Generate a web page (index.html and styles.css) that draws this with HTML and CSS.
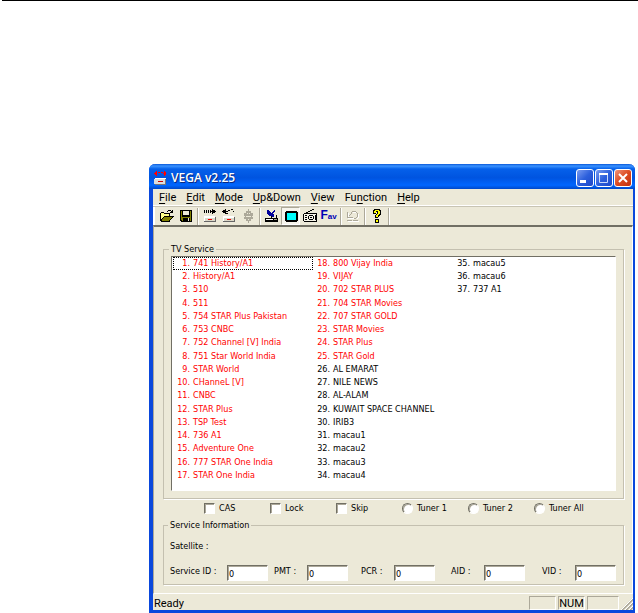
FILE: index.html
```
<!DOCTYPE html>
<html lang="en">
<head>
  <meta charset="UTF-8">
  <meta name="viewport" content="width=device-width, initial-scale=1.0">
  <title>VEGA v2.25</title>
  <link rel="stylesheet" href="styles.css">
</head>
<body>
  <hr class="page-rule">
  <main class="window">
    <header class="titlebar">
      <svg class="app-icon" width="16" height="16" viewBox="0 0 16 16" shape-rendering="crispEdges">
        <path fill="#f00" d="M2 2h2v1h-2zM1 3h3v1h-3zM2 4h2v1h-2zM3 1h1v5h-1zM5 2h2v1h-2zM8 2h2v1h-2zM10 3h3v1h-3zM11 2h2v3h-2zM11 1h1v5h-1z"/>
        <path fill="#ddd" d="M1 9h11v5h-11z"/>
        <path fill="#fff" d="M2 8h11v1h-11z"/>
        <path fill="#777" d="M12 9h1v5h-1zM2 14h11v1h-11z"/>
        <path fill="#c00" d="M5 11h5v1h-5z"/>
      </svg>
      <h1>VEGA v2.25</h1>
      <div class="window-buttons">
        <button class="win-btn" aria-label="Minimize"><svg width="16" height="16" viewBox="0 0 16 16"><path fill="#fff" d="M3 10h6v3h-6z"/></svg></button>
        <button class="win-btn" aria-label="Maximize"><svg width="16" height="16" viewBox="0 0 16 16"><path fill="none" stroke="#c8d8fa" d="M3.500 4.500h8v8h-8z"/><path fill="#fff" d="M3 3h9v2h-9z"/></svg></button>
        <button class="win-btn close" aria-label="Close"><svg width="16" height="16" viewBox="0 0 16 16"><path stroke="#fff" stroke-width="2" d="M4 4l8 8M12 4l-8 8"/></svg></button>
      </div>
    </header>

    <nav class="menubar">
      <button><u>F</u>ile</button>
      <button><u>E</u>dit</button>
      <button><u>M</u>ode</button>
      <button><u>U</u>p&amp;Down</button>
      <button><u>V</u>iew</button>
      <button>Fu<u>n</u>ction</button>
      <button><u>H</u>elp</button>
    </nav>

    <div class="toolbar">
      <button aria-label="Open">
        <svg width="16" height="16" viewBox="0 0 16 16" shape-rendering="crispEdges">
          <path d="M9 2h3v1h-3zM8 3h1v1h-1zM12 3h1v1h-1zM13 2h1v3h-1zM11 4h2v1h-2zM2 4h3v1h-3zM1 5h1v8h-1zM5 5h6v1h-6zM10 6h1v2h-1zM5 8h10v1h-10zM4 9h1v1h-1zM3 10h1v1h-1zM2 11h1v2h-1zM13 9h1v1h-1zM12 10h1v1h-1zM11 11h1v1h-1zM2 13h9v1h-9zM10 12h1v1h-1z"/>
          <path fill="#ff8" d="M2 5h3v1h5v2h-5v1h-1v1h-1v1h-1z"/>
          <path fill="#808000" d="M5 9h8v1h-1v1h-1v1h-1v1h-7v-2h1v-1h1z"/>
        </svg>
      </button>
      <button aria-label="Save">
        <svg width="16" height="16" viewBox="0 0 16 16" shape-rendering="crispEdges">
          <path d="M2 2h12v12h-11v-1h-1z"/>
          <path fill="#808000" d="M3 3h1v6h8v-6h1v10h-9v-1h-1z"/>
          <path fill="#ece9d8" d="M5 3h6v4h-6z"/>
          <path d="M5 10h7v3h-7z"/>
          <path fill="#ece9d8" d="M10 10h1v3h-1z"/>
        </svg>
      </button>
      <span class="sep"></span>
      <button aria-label="Receive from device">
        <svg width="16" height="16" viewBox="0 0 16 16" shape-rendering="crispEdges">
          <path d="M2 2h1v3h-1zM4 2h1v3h-1zM6 2h1v3h-1zM8 2h1v3h-1zM9 3h4v1h-4zM10 1h1v5h-1zM11 2h2v3h-2zM13 3h1v1h-1z"/>
          <path fill="#fff" d="M2 8h11v2h-11zM2 9h1v4h-1z"/>
          <path fill="#dcd8c8" d="M3 10h10v3h-10z"/>
          <path fill="#666" d="M13 9h1v5h-1zM2 13h11v1h-11z"/>
          <path fill="#e00" d="M6 11h4v1h-4z"/>
        </svg>
      </button>
      <button aria-label="Send to device">
        <svg width="16" height="16" viewBox="0 0 16 16" shape-rendering="crispEdges">
          <path d="M1 3h1v1h-1zM2 2h2v3h-2zM4 1h1v5h-1zM5 3h2v1h-2zM7 2h2v1h-2zM10 1h2v1h-2zM12 3h1v1h-1zM5 5h2v1h-2z"/>
          <path fill="#fff" d="M2 8h11v2h-11zM2 9h1v4h-1z"/>
          <path fill="#dcd8c8" d="M3 10h10v3h-10z"/>
          <path fill="#666" d="M13 9h1v5h-1zM2 13h11v1h-11z"/>
          <path fill="#e00" d="M6 11h4v1h-4z"/>
        </svg>
      </button>
      <button aria-label="Stop transfer" disabled>
        <svg width="16" height="16" viewBox="0 0 16 16" shape-rendering="crispEdges">
          <path fill="#aca899" d="M8 1h1v2h2v2h2v3h-1v1h1v2h-2v2h-2v2h-1v-2h-2v-2h-2v-2h1v-1h-1v-3h2v-2h2z"/>
          <path fill="#ece9d8" d="M7 5h1v1h-1zM9 5h1v1h-1zM6 8h5v1h-5zM8 11h1v1h-1z"/>
        </svg>
      </button>
      <span class="sep"></span>
      <button aria-label="Satellite setup">
        <svg width="16" height="16" viewBox="0 0 16 16" shape-rendering="crispEdges">
          <path fill="#00009c" d="M3 2h2v1h1v1h1v1h1v-1h1v-1h1v-1h1v2h-1v1h-1v1h1v3h-3v-1h-2v-1h-1v-1h-1z"/>
          <path d="M7 8h1v2h-1zM1 10h13v4h-13zM12 7h1v3h-1z"/>
          <path fill="#fff" d="M2 11h7v1h-7z"/>
          <path fill="#aca899" d="M10 11h3v1h-3z"/>
        </svg>
      </button>
      <button class="pressed" aria-label="TV services" aria-pressed="true">
        <svg width="16" height="16" viewBox="0 0 16 16" shape-rendering="crispEdges">
          <path d="M3 3h11v1h1v9h-1v1h-11v-1h-1v-9h1z"/>
          <path fill="#0ff" d="M4 5h9v7h-9z"/>
        </svg>
      </button>
      <button aria-label="Radio services">
        <svg width="16" height="16" viewBox="0 0 16 16" shape-rendering="crispEdges">
          <path d="M10 1h2v1h-2zM8 2h2v1h-2zM6 3h2v1h-2zM4 4h2v1h-2zM2 5h13v1h-13zM1 6h1v7h-1zM14 6h1v7h-1zM2 13h13v1h-13z"/>
          <path fill="#f6f4e8" d="M2 6h12v7h-12z"/>
          <path d="M3 7h2v1h-2zM3 9h2v1h-2zM3 11h2v1h-2zM7 7h4v1h-4zM6 8h1v3h-1zM11 8h1v3h-1zM7 11h4v1h-4zM8 9h2v1h-2zM13 7h1v5h-1z"/>
        </svg>
      </button>
      <button class="fav" aria-label="Favourites"><b>F</b>av</button>
      <span class="sep"></span>
      <button aria-label="Undo" disabled>
        <svg width="16" height="16" viewBox="0 0 16 16" shape-rendering="crispEdges">
          <path fill="#fff" d="M3 5h1v5h5v1h-6zM8 4h4v1h1v1h1v4h-1v1h-1v-1h1v-4h-1v-1h-4zM3 13h11v1h-11z"/>
          <path fill="#aca899" d="M2 4h1v5h5v1h-6zM4 7h1v1h-1zM5 6h1v1h-1zM6 4h1v2h-1zM7 3h4v1h-4zM11 4h1v1h-1zM12 5h1v4h-1zM11 9h1v1h-1zM9 10h2v1h-2zM2 12h5v1h-5zM8 12h5v1h-5z"/>
        </svg>
      </button>
      <span class="sep"></span>
      <button aria-label="Help">
        <svg width="16" height="16" viewBox="0 0 16 16" shape-rendering="crispEdges">
          <path d="M5 1h6v1h1v5h-1v1h-1v1h-1v1h-3v-3h1v-1h1v-2h-1v2h-3v-4h1zM6 11h4v4h-4z"/>
          <path fill="#ff0" d="M6 2h4v1h1v3h-1v1h-1v2h-2v-2h1v-1h1v-3h-2v2h-2v-2h1zM7 12h2v2h-2z"/>
        </svg>
      </button>
      <span class="sep"></span>
    </div>

    <section class="client">
      <fieldset class="tv">
        <legend>TV Service</legend>
        <ol class="services">
          <li class="scrambled focused"><span>1.</span>741 History/A1</li>
          <li class="scrambled"><span>2.</span>History/A1</li>
          <li class="scrambled"><span>3.</span>510</li>
          <li class="scrambled"><span>4.</span>511</li>
          <li class="scrambled"><span>5.</span>754 STAR Plus Pakistan</li>
          <li class="scrambled"><span>6.</span>753 CNBC</li>
          <li class="scrambled"><span>7.</span>752 Channel [V] India</li>
          <li class="scrambled"><span>8.</span>751 Star World India</li>
          <li class="scrambled"><span>9.</span>STAR World</li>
          <li class="scrambled"><span>10.</span>CHanneL [V]</li>
          <li class="scrambled"><span>11.</span>CNBC</li>
          <li class="scrambled"><span>12.</span>STAR Plus</li>
          <li class="scrambled"><span>13.</span>TSP Test</li>
          <li class="scrambled"><span>14.</span>736 A1</li>
          <li class="scrambled"><span>15.</span>Adventure One</li>
          <li class="scrambled"><span>16.</span>777 STAR One India</li>
          <li class="scrambled"><span>17.</span>STAR One India</li>
          <li class="scrambled"><span>18.</span>800 Vijay India</li>
          <li class="scrambled"><span>19.</span>VIJAY</li>
          <li class="scrambled"><span>20.</span>702 STAR PLUS</li>
          <li class="scrambled"><span>21.</span>704 STAR Movies</li>
          <li class="scrambled"><span>22.</span>707 STAR GOLD</li>
          <li class="scrambled"><span>23.</span>STAR Movies</li>
          <li class="scrambled"><span>24.</span>STAR Plus</li>
          <li class="scrambled"><span>25.</span>STAR Gold</li>
          <li><span>26.</span>AL EMARAT</li>
          <li><span>27.</span>NILE NEWS</li>
          <li><span>28.</span>AL-ALAM</li>
          <li><span>29.</span>KUWAIT SPACE CHANNEL</li>
          <li><span>30.</span>IRIB3</li>
          <li><span>31.</span>macau1</li>
          <li><span>32.</span>macau2</li>
          <li><span>33.</span>macau3</li>
          <li><span>34.</span>macau4</li>
          <li><span>35.</span>macau5</li>
          <li><span>36.</span>macau6</li>
          <li><span>37.</span>737 A1</li>
        </ol>
      </fieldset>

      <div class="options">
        <label><input type="checkbox"> CAS</label>
        <label><input type="checkbox"> Lock</label>
        <label><input type="checkbox"> Skip</label>
        <label><input type="radio" name="tuner"> Tuner 1</label>
        <label><input type="radio" name="tuner"> Tuner 2</label>
        <label><input type="radio" name="tuner"> Tuner All</label>
      </div>

      <fieldset class="info">
        <legend>Service Information</legend>
        <p>Satellite :</p>
        <div class="fields">
          <div class="field"><label for="sid">Service ID :</label><input id="sid" type="text" value="0"></div>
          <div class="field"><label for="pmt">PMT :</label><input id="pmt" type="text" value="0"></div>
          <div class="field"><label for="pcr">PCR :</label><input id="pcr" type="text" value="0"></div>
          <div class="field"><label for="aid">AID :</label><input id="aid" type="text" value="0"></div>
          <div class="field"><label for="vid">VID :</label><input id="vid" type="text" value="0"></div>
        </div>
      </fieldset>
    </section>

    <footer class="statusbar">
      <span class="message">Ready</span>
      <span class="pane"></span>
      <span class="pane">NUM</span>
      <span class="pane wide"></span>
      <svg class="grip" width="12" height="12" viewBox="0 0 12 12">
        <path stroke="#aca899" stroke-width="2" d="M1 12L12 1M5 12L12 5M9 12L12 9"/>
        <path stroke="#fff" d="M0 12L12 0M4 12L12 4M8 12L12 8"/>
      </svg>
    </footer>
  </main>
</body>
</html>
```
FILE: styles.css
```
* {
  box-sizing: border-box;
}
body {
  margin: 0;
  background: #fff;
  color: #000;
  font-family: "DejaVu Sans Condensed", "DejaVu Sans", sans-serif;
  font-size: 9px;
  line-height: 13px;
}
button, input {
  font: inherit;
  color: inherit;
  margin: 0;
  padding: 0;
}
.page-rule {
  height: 1px;
  margin: 0 0 163px 2px;
  border: 0;
  background: #000;
}
.window {
  margin: 0 3px 0 149px;
  border: solid #0a48dc;
  border-width: 0 2px 3px 4px;
  border-radius: 6px 6px 0 0;
  background: #ece9d8;
}

/* title bar */
.titlebar {
  display: flex;
  align-items: center;
  gap: 2px;
  height: 25px;
  margin: 0 -2px 0 -4px;
  padding: 2px 3px 0 4px;
  border-radius: 6px 6px 0 0;
  background: linear-gradient(#0a58d8 0, #3a93ff 8%, #0560ea 20%, #0054e0 55%, #0066ff 85%, #0048c8 100%);
}
.titlebar h1 {
  flex: 1;
  margin: 0;
  color: #fff;
  font: 600 12px/16px "Open Sans", sans-serif;
  text-shadow: 1px 1px #0a2a80;
}
.window-buttons {
  display: flex;
  gap: 1px;
}
.win-btn {
  width: 18px;
  height: 18px;
  border: 1px solid #fff;
  border-radius: 3px;
  background: linear-gradient(135deg, #7a9cf0, #2c5fdc 50%, #1e48c8);
}
.win-btn.close {
  background: linear-gradient(135deg, #f0937a, #dc4a20 50%, #c03010);
}
.win-btn svg {
  display: block;
}

/* menu */
.menubar {
  display: flex;
  gap: 10px;
  height: 18px;
  padding-left: 6px;
  border-bottom: 1px solid #c8c4b4;
  box-shadow: inset 0 -1px #fff;
}
.menubar button {
  border: 0;
  background: none;
  font: 11px/16px Roboto, "Liberation Sans", sans-serif;
}
.menubar u {
  text-underline-offset: 2px;
}

/* toolbar */
.toolbar {
  display: flex;
  align-items: center;
  height: 18px;
  padding-left: 4px;
  box-shadow: inset 2px 0 #fff;
}
.toolbar button {
  display: grid;
  place-items: center;
  width: 19px;
  height: 18px;
  border: 0;
  background: none;
}
.toolbar svg {
  display: block;
}
.toolbar .pressed {
  border: 1px solid;
  border-color: #aca899 #fff #fff #aca899;
  background: #f6f4ec;
}
.sep {
  width: 2px;
  height: 17px;
  margin: 0 1px 0 2px;
  border-left: 1px solid #aca899;
  border-right: 1px solid #fff;
}
.toolbar .fav {
  display: flex;
  align-items: baseline;
  justify-content: center;
  color: #0000b4;
  font: bold 8px/16px "Liberation Sans", sans-serif;
}
.fav b {
  font-size: 12px;
}

/* client area */
.client {
  padding: 16px 8px 8px 9px;
  border: 1px solid;
  border-width: 2px 1px 1px;
  border-color: #716f64 #fff #fff #aca899;
}
fieldset {
  min-width: 0;
  margin: 0;
  border: 1px solid #c4c0b0;
  box-shadow: 1px 1px #fff;
}
legend {
  margin-left: -2px;
  padding: 0 2px;
}
.tv {
  padding: 0 7px 7px;
}
.services {
  display: grid;
  grid-template-rows: repeat(17, 1fr);
  grid-auto-flow: column;
  grid-auto-columns: 140px;
  height: 235px;
  margin: 0;
  padding: 0 0 8px 1px;
  border: 1px solid;
  border-color: #716f64 #fff #fff #716f64;
  background: #fff;
  list-style: none;
  overflow: hidden;
}
.services li {
  display: flex;
  gap: 3px;
  padding-left: 3px;
  white-space: nowrap;
}
.services span {
  width: 14px;
  text-align: right;
}
.services .scrambled {
  color: #f00;
}
.services .focused {
  outline: 1px dotted #000;
  outline-offset: -1px;
}

/* lock flags and tuner choice */
.options {
  display: grid;
  grid-template-columns: repeat(5, 66px) auto;
  margin: 3px 0 4px 41px;
}
.options label {
  display: flex;
  align-items: center;
  gap: 4px;
}
.options input {
  appearance: none;
  width: 11px;
  height: 11px;
  border: 1px solid;
  border-color: #716f64 #fff #fff #716f64;
  background: #fff;
  box-shadow: inset 1px 1px #aca899;
}
.options input[type="radio"] {
  border-radius: 50%;
}

/* service information */
.info {
  padding: 8px 7px 3px 6px;
}
.info p {
  margin: 0 0 12px;
}
.fields {
  display: grid;
  grid-template-columns: 104px 87px 90px 91px auto;
}
.field {
  display: flex;
}
.field label {
  width: 33px;
  white-space: nowrap;
}
.field:first-child label {
  width: 57px;
}
.field input {
  width: 41px;
  height: 16px;
  padding: 1px 0 0 1px;
  border: 1px solid;
  border-color: #716f64 #fff #fff #716f64;
  background: #fff;
  box-shadow: inset 1px 1px #aca899;
}

/* status bar */
.statusbar {
  display: flex;
  align-items: flex-end;
  gap: 2px;
  height: 16px;
  font: 11px/13px Roboto, "Liberation Sans", sans-serif;
}
.message {
  flex: 1;
  padding-left: 1px;
}
.pane {
  width: 27px;
  height: 14px;
  border: 1px solid;
  border-color: #aca899 #fff #fff #aca899;
  text-align: center;
}
.pane.wide {
  width: 32px;
}
```
